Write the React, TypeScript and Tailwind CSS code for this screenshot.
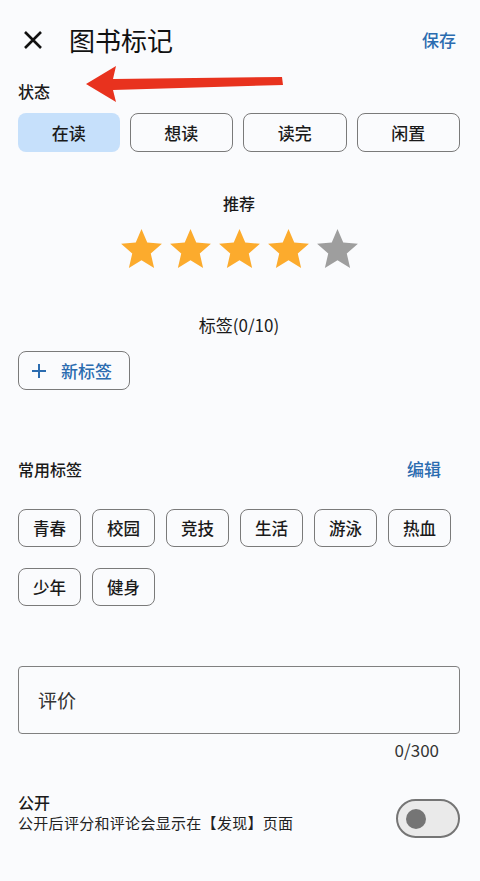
const font = { fontFamily: '"Noto Sans CJK SC", "Noto Sans", sans-serif' };

const statuses = ['在读', '想读', '读完', '闲置'];
const tags = ['青春', '校园', '竞技', '生活', '游泳', '热血', '少年', '健身'];

function Star({ on }: { on: boolean }) {
    return (
        <svg width="49" height="49" viewBox="0 0 24 24">
            <path
                d="M12 17.27L18.18 21l-1.64-7.03L22 9.24l-7.19-.61L12 2 9.19 8.63 2 9.24l5.46 4.73L5.82 21z"
                fill={on ? '#fcab2d' : '#9e9e9e'}
            />
        </svg>
    );
}

export default function App() {
    return (
        <div className="relative min-h-[881px] w-[480px] bg-[#fafbfd] text-[#1a1a1a] overflow-hidden" style={font}>
            {/* Header */}
            <div className="h-[80px] flex items-center pl-[22px] pr-[24px]">
                <svg width="22" height="22" viewBox="0 0 22 22" className="shrink-0">
                    <path d="M3 3L19 19M19 3L3 19" stroke="#111" strokeWidth="2.6" strokeLinecap="butt" />
                </svg>
                <h1 className="ml-[25px] text-[26px] leading-none text-[#111]">图书标记</h1>
                <button className="ml-auto text-[17px] text-[#2b6cb0] font-medium">保存</button>
            </div>

            {/* annotation arrow */}
            <svg className="absolute left-0 top-0 pointer-events-none" width="300" height="110" viewBox="0 0 300 110">
                <polygon points="86,84 116,66 113,79 282,77 283,85 113,90 116,102" fill="#e8321e" />
            </svg>

            <div className="pl-[18px] pr-[20px]">
                {/* Status */}
                <div className="text-[16px] leading-[22px] font-medium">状态</div>
                <div className="mt-[11px] flex gap-[10px]">
                    {statuses.map((s, i) => (
                        <div
                            key={s}
                            className={
                                i === 0
                                    ? 'flex-1 h-[39px] rounded-[8px] bg-[#c6e0fb] flex items-center justify-center text-[17px] font-medium'
                                    : 'flex-1 h-[39px] rounded-[8px] border-[1.5px] border-[#7a7a7a] flex items-center justify-center text-[17px] font-medium'
                            }
                        >
                            {s}
                        </div>
                    ))}
                </div>

                {/* Rating */}
                <div className="mt-[40px] text-center text-[16px] leading-[22px] font-medium">推荐</div>
                <div className="mt-[11px] flex justify-center">
                    {[0, 1, 2, 3, 4].map((i) => (
                        <Star key={i} on={i < 4} />
                    ))}
                </div>

                {/* Tags */}
                <div className="mt-[40px] text-center text-[17px] leading-[22px]">标签(0/10)</div>
                <button className="mt-[15px] w-[112px] h-[39px] rounded-[8px] border-[1.5px] border-[#7a7a7a] flex items-center pl-[13px] text-[#2b6cb0] text-[17px]">
                    <svg width="14" height="14" viewBox="0 0 14 14">
                        <path d="M7 0V14M0 7H14" stroke="#2b6cb0" strokeWidth="2" />
                    </svg>
                    <span className="ml-[15px] font-medium">新标签</span>
                </button>

                <div className="mt-[68px] h-[22px] flex items-center">
                    <div className="text-[16px] leading-[22px] font-medium">常用标签</div>
                    <button className="ml-auto mr-[19px] text-[17px] leading-[22px] text-[#2b6cb0] font-medium">编辑</button>
                </div>
                <div className="mt-[29px] flex flex-wrap gap-x-[11px] gap-y-[21px]">
                    {tags.map((t) => (
                        <div
                            key={t}
                            className="w-[63px] h-[38px] rounded-[8px] border-[1.5px] border-[#7a7a7a] flex items-center justify-center text-[16.5px] font-medium"
                        >
                            {t}
                        </div>
                    ))}
                </div>

                {/* Review */}
                <div className="mt-[60px] h-[68px] rounded-[4px] border-[1.5px] border-[#808080] flex items-center pl-[19px] text-[19px] text-[#333]">
                    评价
                </div>
                <div className="mt-[5px] pr-[21px] text-right text-[17px] leading-[22px] text-[#333]">0/300</div>

                {/* Public */}
                <div className="mt-[30px] flex items-start">
                    <div>
                        <div className="text-[16px] leading-[22px] font-medium">公开</div>
                        <div className="text-[15px] leading-[20px] tracking-[0.3px] text-[#222]">公开后评分和评论会显示在【发现】页面</div>
                    </div>
                    <div className="ml-auto mt-[8px] w-[64px] h-[39px] rounded-full border-[2px] border-[#757575] bg-[#eaeaea] flex items-center pl-[8px]">
                        <div className="w-[20px] h-[20px] rounded-full bg-[#757575]" />
                    </div>
                </div>
            </div>
        </div>
    );
}
